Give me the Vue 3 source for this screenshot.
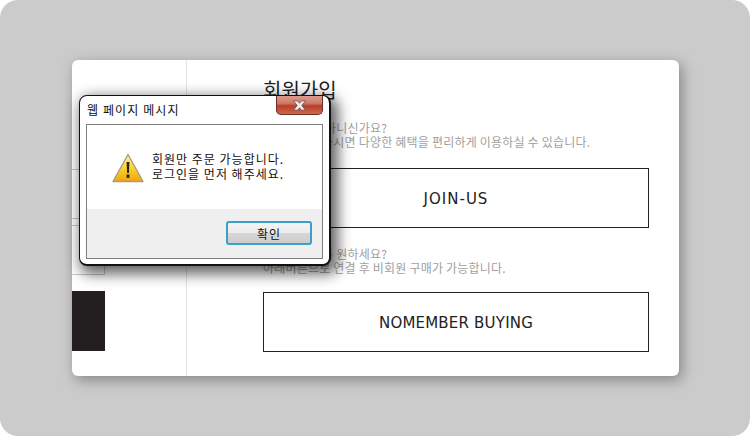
<template>
  <div class="page">
    <div class="card">
      <div class="side">
        <div class="field first"></div>
        <div class="field second"></div>
        <div class="black-btn"></div>
      </div>
      <div class="main">
        <h2 class="title">회원가입</h2>
        <p class="desc first-desc">
          아직 회원이 아니신가요?<br />
          회원가입을 하시면 다양한 혜택을 편리하게 이용하실 수 있습니다.
        </p>
        <a class="big-btn join">JOIN-US</a>
        <p class="desc second-desc">
          비회원 구매를 원하세요?<br />
          아래버튼으로 연결 후 비회원 구매가 가능합니다.
        </p>
        <a class="big-btn guest">NOMEMBER BUYING</a>
      </div>
    </div>

    <div class="dialog">
      <div class="dialog-head">
        <span class="dialog-title">웹 페이지 메시지</span>
        <span class="close">
          <svg width="15" height="11" viewBox="0 0 15 11">
            <path d="M1.5 .8h4L7.5 3.2 9.5 .8h4L9.8 5.5l3.7 4.7h-4L7.5 7.8 5.5 10.2h-4l3.7-4.7z" fill="#f1ecec" stroke="#6a4a46" stroke-width="0.8" />
          </svg>
        </span>
      </div>
      <div class="dialog-box">
        <div class="dialog-msg">
          <svg class="warn" width="32" height="30" viewBox="0 0 32 30">
            <defs>
              <linearGradient id="warnFill" x1="0" y1="0" x2="0" y2="1">
                <stop offset="0" stop-color="#fff2a8" />
                <stop offset="0.55" stop-color="#fbcf2a" />
                <stop offset="1" stop-color="#eea508" />
              </linearGradient>
            </defs>
            <path d="M16 1.5 31 28.5H1z" fill="url(#warnFill)" stroke="#a89c80" stroke-width="1.4" stroke-linejoin="round" />
            <path d="M14.6 9h2.8l-.5 11h-1.8z" fill="#2a2412" />
            <rect x="14.6" y="21.5" width="2.8" height="3.4" fill="#2a2412" />
          </svg>
          <div class="msg-text">
            회원만 주문 가능합니다.<br />
            로그인을 먼저 해주세요.
          </div>
        </div>
        <div class="dialog-foot">
          <button class="ok">확인</button>
        </div>
      </div>
    </div>
  </div>
</template>

<script setup>
</script>

<style>
html,
body {
  margin: 0;
  background: #fff;
}
</style>

<style scoped>
.page {
  position: relative;
  width: 750px;
  height: 436px;
  box-sizing: border-box;
  padding: 60px 71px 60px 72px;
  background: #cbcbcb;
  border-radius: 18px;
  overflow: hidden;
  font-family: "DejaVu Sans", "Noto Sans CJK KR", sans-serif;
}
.card {
  display: flex;
  height: 316px;
  background: #fff;
  border-radius: 6px;
  box-shadow: 3px 4px 14px rgba(0, 0, 0, 0.35);
}
.side {
  width: 114px;
  border-right: 1px solid #e4e4e4;
  display: flex;
  flex-direction: column;
}
.field {
  width: 33px;
  height: 50px;
  box-sizing: border-box;
  border: 1px solid #c8c8c8;
  border-left: 0;
}
.field.first {
  margin-top: 109px;
}
.field.second {
  margin-top: 6px;
}
.black-btn {
  width: 33px;
  height: 60px;
  margin-top: 16px;
  background: #231f20;
}
.main {
  padding-left: 76px;
  width: 386px;
}
.title {
  margin: 19px 0 0;
  font-family: "Noto Sans CJK KR", sans-serif;
  font-size: 20px;
  line-height: 22px;
  font-weight: 400;
  color: #222;
}
.desc {
  margin: 0;
  font-family: "Noto Sans CJK KR", sans-serif;
  font-size: 12px;
  line-height: 14px;
  letter-spacing: 0.2px;
  color: #a0a0a0;
}
.first-desc {
  margin-top: 20px;
}
.second-desc {
  margin-top: 19px;
}
.big-btn {
  display: block;
  box-sizing: border-box;
  height: 60px;
  border: 1px solid #222;
  text-align: center;
  font-size: 15px;
  line-height: 60px;
  letter-spacing: 0.2px;
  color: #222;
}
.join {
  margin-top: 19px;
  letter-spacing: 1px;
}
.guest {
  margin-top: 17px;
}
.dialog {
  position: absolute;
  left: 79px;
  top: 95px;
  width: 252px;
  height: 171px;
  box-sizing: border-box;
  padding: 0 6px 6px;
  background: #fff;
  border: 1px solid #111;
  border-bottom-width: 2px;
  border-right-width: 2px;
  border-radius: 8px;
  box-shadow: 4px 5px 14px 3px rgba(0, 0, 0, 0.62);
}
.dialog-head {
  position: relative;
  height: 28px;
}
.dialog-title {
  display: block;
  padding: 6px 0 0 1px;
  font-family: "Noto Sans CJK KR", sans-serif;
  font-size: 12px;
  line-height: 16px;
  letter-spacing: 1.1px;
  color: #111;
}
.close {
  position: absolute;
  right: 0;
  top: 0;
  width: 47px;
  height: 19px;
  display: flex;
  align-items: center;
  justify-content: center;
  box-sizing: border-box;
  border: 1px solid #6b3028;
  border-top: 0;
  border-radius: 0 0 5px 5px;
  background: linear-gradient(#dd9a8c 0, #cf7a69 40%, #b5402a 55%, #d2654d 100%);
}
.dialog-box {
  display: flex;
  flex-direction: column;
  height: 135px;
  box-sizing: border-box;
  border: 1px solid #7f7f7f;
  background: #fff;
}
.dialog-msg {
  flex: 1;
  display: flex;
  align-items: flex-start;
  padding: 26px 0 0 25px;
}
.warn {
  margin-top: 2px;
  flex: none;
}
.msg-text {
  margin-left: 8px;
  font-family: "Noto Sans CJK KR", sans-serif;
  font-size: 12px;
  line-height: 15px;
  letter-spacing: 1px;
  color: #111;
}
.dialog-foot {
  display: flex;
  justify-content: flex-end;
  height: 49px;
  box-sizing: border-box;
  padding: 12px 10px 0 0;
  background: #efefef;
}
.ok {
  width: 86px;
  height: 24px;
  padding: 2px 0 0;
  border: 2px solid #3c9fc9;
  border-radius: 3px;
  background: linear-gradient(#f4f4f4, #ececec 48%, #d6d6d6 52%, #cdcdcd);
  font-family: "Noto Sans CJK KR", sans-serif;
  font-size: 12px;
  line-height: 16px;
  letter-spacing: 1px;
  color: #111;
}
</style>
